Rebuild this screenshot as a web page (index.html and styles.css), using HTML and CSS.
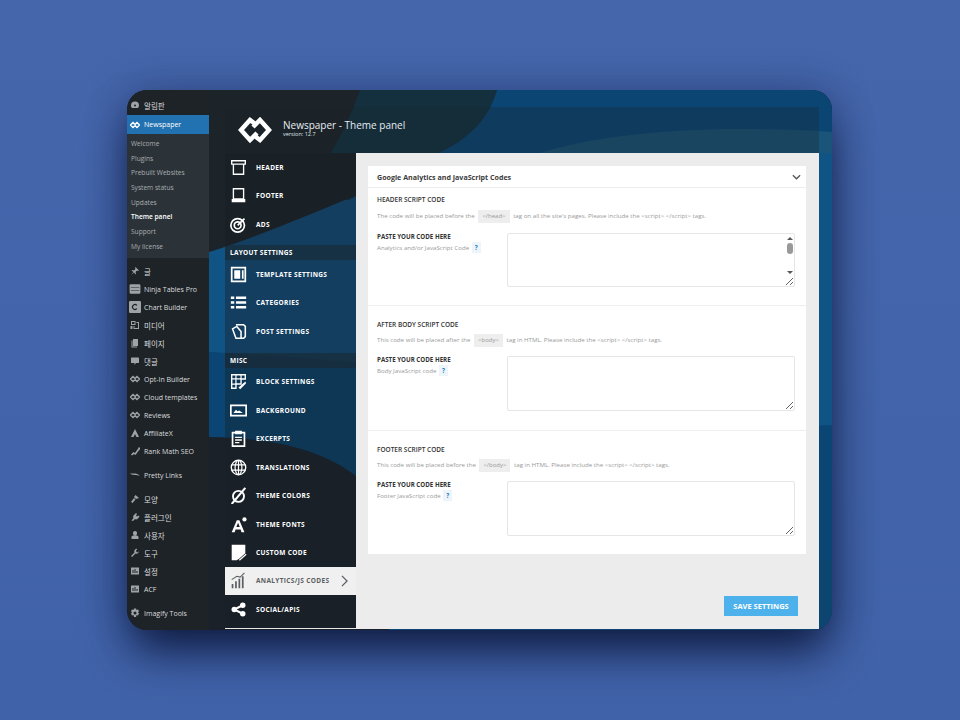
FILE: index.html
```html
<!DOCTYPE html>
<html lang="ko">
<head>
  <meta charset="UTF-8">
  <meta name="viewport" content="width=device-width, initial-scale=1.0">
  <title>Newspaper - Theme panel</title>
  <link rel="stylesheet" href="styles.css">
</head>

<body>
  <svg class="sprite" width="0" height="0">
    <symbol id="i-eye" viewBox="0 0 20 20"><path d="M1 10l5-5 4 4 4-4 5 5-5 5-4-4-4 4z" fill="none" stroke="currentColor" stroke-width="3"/></symbol>
    <symbol id="i-gauge" viewBox="0 0 20 20"><path d="M10 3a8 8 0 0 0-8 8c0 2 .7 4 2 5h12a8 8 0 0 0 2-5 8 8 0 0 0-8-8zm0 10a2 2 0 1 1 0-4 2 2 0 0 1 0 4z" fill="currentColor"/></symbol>
    <symbol id="i-pin" viewBox="0 0 20 20"><path d="M11 2l7 7-2 1-2-1-3 3 1 3-1 2-3-4-6 5 5-6-4-3 2-1 3 1 3-3-1-2z" fill="currentColor"/></symbol>
    <symbol id="i-table" viewBox="0 0 20 20"><path d="M1 4a2 2 0 0 1 2-2h14a2 2 0 0 1 2 2v12a2 2 0 0 1-2 2H3a2 2 0 0 1-2-2zm2 3v1h14V7zm0 5v1h14v-1z" fill="currentColor" fill-rule="evenodd"/></symbol>
    <symbol id="i-chart" viewBox="0 0 20 20"><path d="M2 0h16a2 2 0 0 1 2 2v16a2 2 0 0 1-2 2H2a2 2 0 0 1-2-2V2a2 2 0 0 1 2-2zm12 7a5 5 0 1 0 0 6l-2-1a3 3 0 1 1 0-4z" fill="currentColor" fill-rule="evenodd"/></symbol>
    <symbol id="i-media" viewBox="0 0 20 20"><path d="M2 2h9v8H2zm2 2v4h5V4zm9 0h5v14H7v-6h2v4h7V6h-3zM1 12h4v6H1z" fill="currentColor" fill-rule="evenodd"/></symbol>
    <symbol id="i-page" viewBox="0 0 20 20"><path d="M6 2h10v14H6zM3 5h2v12h9v2H3z" fill="currentColor"/></symbol>
    <symbol id="i-comment" viewBox="0 0 20 20"><path d="M3 3h14a1 1 0 0 1 1 1v9a1 1 0 0 1-1 1h-5l-3 4v-4H3a1 1 0 0 1-1-1V4a1 1 0 0 1 1-1z" fill="currentColor"/></symbol>
    <symbol id="i-peak" viewBox="0 0 20 20"><path d="M10 2l8 16h-5l-3-6-3 6H2z" fill="currentColor"/></symbol>
    <symbol id="i-math" viewBox="0 0 20 20"><path d="M2 17l5-5 3 2 7-10-1-1h4v5l-1-1-8 11-3-2-4 3z" fill="currentColor"/></symbol>
    <symbol id="i-link" viewBox="0 0 20 20"><path d="M0 7h10c4 0 7 2 10 5-4-2-7-2-10-2L3 9z" fill="currentColor"/></symbol>
    <symbol id="i-brush" viewBox="0 0 20 20"><path d="M11 2l7 6-6 2-4-4zM8 8l3 3-6 7-3-2z" fill="currentColor"/></symbol>
    <symbol id="i-plug" viewBox="0 0 20 20"><path d="M12 2l2 2-2 3 2 2 3-2 2 2-4 5-3 1-2-1-4 4-3-1 4-5-1-2 1-3z" fill="currentColor"/></symbol>
    <symbol id="i-user" viewBox="0 0 20 20"><path d="M10 2a4 4 0 0 1 4 5 4 4 0 0 1-8 0 4 4 0 0 1 4-5zM3 18v-4c0-2 3-3 4-3h6c1 0 4 1 4 3v4z" fill="currentColor"/></symbol>
    <symbol id="i-tool" viewBox="0 0 20 20"><path d="M18 6a5 5 0 0 1-7 5l-7 7-2-2 7-7a5 5 0 0 1 6-7l-3 3 1 3 3 1z" fill="currentColor"/></symbol>
    <symbol id="i-set" viewBox="0 0 20 20"><path d="M2 3h16v14H2zm7 3v8h2V6zM5 8v6h2V8zm8 2v4h2v-4z" fill="currentColor" fill-rule="evenodd"/></symbol>
    <symbol id="i-gear" viewBox="0 0 20 20"><path d="M8 1h4l1 3 3-1 2 3-2 3 2 2-2 4-3-1-1 4H8l-1-4-3 1-2-4 2-2-2-3 2-3 3 1zm2 6a3 3 0 1 0 0 6 3 3 0 0 0 0-6z" fill="currentColor" fill-rule="evenodd"/></symbol>
  </svg>

  <div class="window">
    <aside class="wp-menu">
      <div class="wp-item"><svg class="wp-icon"><use href="#i-gauge"/></svg><span class="ko">알림판</span></div>
      <div class="wp-item wp-current"><svg class="wp-icon"><use href="#i-eye"/></svg>Newspaper</div>
      <div class="wp-sub">
        <div class="wp-sub-item">Welcome</div>
        <div class="wp-sub-item">Plugins</div>
        <div class="wp-sub-item">Prebuilt Websites</div>
        <div class="wp-sub-item">System status</div>
        <div class="wp-sub-item">Updates</div>
        <div class="wp-sub-item wp-sub-on">Theme panel</div>
        <div class="wp-sub-item">Support</div>
        <div class="wp-sub-item">My license</div>
      </div>
      <div class="wp-group">
        <div class="wp-item"><svg class="wp-icon"><use href="#i-pin"/></svg><span class="ko">글</span></div>
        <div class="wp-item"><svg class="wp-icon wp-icon-big"><use href="#i-table"/></svg>Ninja Tables Pro</div>
        <div class="wp-item"><svg class="wp-icon wp-icon-big"><use href="#i-chart"/></svg>Chart Builder</div>
        <div class="wp-item"><svg class="wp-icon"><use href="#i-media"/></svg><span class="ko">미디어</span></div>
        <div class="wp-item"><svg class="wp-icon"><use href="#i-page"/></svg><span class="ko">페이지</span></div>
        <div class="wp-item"><svg class="wp-icon"><use href="#i-comment"/></svg><span class="ko">댓글</span></div>
        <div class="wp-item"><svg class="wp-icon"><use href="#i-eye"/></svg>Opt-In Builder</div>
        <div class="wp-item"><svg class="wp-icon"><use href="#i-eye"/></svg>Cloud templates</div>
        <div class="wp-item"><svg class="wp-icon"><use href="#i-eye"/></svg>Reviews</div>
        <div class="wp-item"><svg class="wp-icon"><use href="#i-peak"/></svg>AffiliateX</div>
        <div class="wp-item"><svg class="wp-icon"><use href="#i-math"/></svg>Rank Math SEO</div>
      </div>
      <div class="wp-group">
        <div class="wp-item"><svg class="wp-icon"><use href="#i-link"/></svg>Pretty Links</div>
      </div>
      <div class="wp-group">
        <div class="wp-item"><svg class="wp-icon"><use href="#i-brush"/></svg><span class="ko">모양</span></div>
        <div class="wp-item"><svg class="wp-icon"><use href="#i-plug"/></svg><span class="ko">플러그인</span></div>
        <div class="wp-item"><svg class="wp-icon"><use href="#i-user"/></svg><span class="ko">사용자</span></div>
        <div class="wp-item"><svg class="wp-icon"><use href="#i-tool"/></svg><span class="ko">도구</span></div>
        <div class="wp-item"><svg class="wp-icon"><use href="#i-set"/></svg><span class="ko">설정</span></div>
        <div class="wp-item"><svg class="wp-icon"><use href="#i-set"/></svg>ACF</div>
      </div>
      <div class="wp-group">
        <div class="wp-item"><svg class="wp-icon"><use href="#i-gear"/></svg>Imagify Tools</div>
      </div>
    </aside>

    <main class="stage">
      <!-- wave picture behind the panel -->
      <svg class="waves" viewBox="0 0 623 540" preserveAspectRatio="none">
        <rect width="623" height="540" fill="#0a4574"/>
        <path d="M623 52C480 60 240 70 150 105 90 125 40 150 0 160V262C120 268 250 282 330 300 440 320 540 340 623 335z" fill="#105486"/>
        <path d="M623 470C560 462 520 468 470 500V540H623z" fill="#0b4570"/>
        <path d="M0 0H288C280 28 262 48 228 64L140 110H0z" fill="#14303f"/>
        <path d="M0 0H151C140 32 128 52 122 63L160 63V100C100 125 40 150 0 162z" fill="#1c2329"/>
        <path d="M0 347C60 348 110 358 147 386L180 420 180 540H0z" fill="#1a2128"/>
        <path d="M330 63C400 42 500 34 623 42V63z" fill="#1a5478"/>
      </svg>

      <section class="panel">
        <header class="panel-head">
          <svg class="logo" viewBox="0 0 34 26">
            <path d="M16 6L12 3 3 13l9 10 7-7M18 20l4 3 9-10-9-10-7 7" fill="none" stroke="#fff" stroke-width="4.500"/>
          </svg>
          <div>
            <div class="panel-title">Newspaper - Theme panel</div>
            <div class="panel-version">version: 12.7</div>
          </div>
        </header>

        <div class="panel-body">
          <nav class="nav">
            <a class="nav-item">
              <svg class="nav-icon" viewBox="0 0 20 20"><path d="M4 6v12h12V6" fill="none" stroke="currentColor" stroke-width="1.600"/><path d="M2 2h16v4H2z" fill="none" stroke="currentColor" stroke-width="1.600"/></svg>
              HEADER
            </a>
            <a class="nav-item">
              <svg class="nav-icon" viewBox="0 0 20 20"><path d="M4 2h12v12H4z" fill="none" stroke="currentColor" stroke-width="1.600"/><path d="M2 14h16v4H2z" fill="currentColor"/></svg>
              FOOTER
            </a>
            <a class="nav-item">
              <svg class="nav-icon" viewBox="0 0 20 20"><circle cx="9" cy="11" r="8" fill="none" stroke="currentColor" stroke-width="2"/><circle cx="9" cy="11" r="4" fill="none" stroke="currentColor" stroke-width="2"/><path d="M9 11l8-8" stroke="currentColor" stroke-width="2"/></svg>
              ADS
            </a>
            <div class="nav-heading">LAYOUT SETTINGS</div>
            <a class="nav-item">
              <svg class="nav-icon" viewBox="0 0 20 20"><path d="M2 2h16v16H2z" fill="none" stroke="currentColor" stroke-width="2"/><path d="M5 5h7v10H5zM14 5h2v10h-2z" fill="currentColor"/></svg>
              TEMPLATE SETTINGS
            </a>
            <a class="nav-item">
              <svg class="nav-icon" viewBox="0 0 20 20"><path d="M1 3h4v3H1zM7 3h12v3H7zM1 8.500h4v3H1zM7 8.500h12v3H7zM1 14h4v3H1zM7 14h12v3H7z" fill="currentColor"/></svg>
              CATEGORIES
            </a>
            <a class="nav-item">
              <svg class="nav-icon" viewBox="0 0 20 20"><path d="M7 2h9l2 2v12l-2 2H7M3 7l5-3 5 6v8H7z" fill="none" stroke="currentColor" stroke-width="1.800"/></svg>
              POST SETTINGS
            </a>
            <div class="nav-heading">MISC</div>
            <a class="nav-item">
              <svg class="nav-icon" viewBox="0 0 20 20"><path d="M2 2h16v5H13v6H7v5H2z" fill="none" stroke="currentColor" stroke-width="1.600"/><path d="M2 7h11M2 13h5M7 2v5M13 2v5M7 7v6" stroke="currentColor" stroke-width="1.400"/><path d="M10 17l8-7 1 2-7 7z" fill="currentColor"/></svg>
              BLOCK SETTINGS
            </a>
            <a class="nav-item">
              <svg class="nav-icon" viewBox="0 0 20 20"><path d="M1 4h18v12H1z" fill="none" stroke="currentColor" stroke-width="2"/><path d="M4 13l3-4 2 2 2-1 4 3z" fill="currentColor"/></svg>
              BACKGROUND
            </a>
            <a class="nav-item">
              <svg class="nav-icon" viewBox="0 0 20 20"><path d="M3 3h14v16H3z" fill="none" stroke="currentColor" stroke-width="2"/><path d="M6 1h8v4H6zM6 8h8v1.500H6zM6 11h8v1.500H6zM6 14h5v1.500H6z" fill="currentColor"/></svg>
              EXCERPTS
            </a>
            <a class="nav-item">
              <svg class="nav-icon" viewBox="0 0 20 20"><circle cx="10" cy="10" r="8.500" fill="none" stroke="currentColor" stroke-width="1.600"/><path d="M2 7h16M2 13h16M10 2v16" stroke="currentColor" stroke-width="1.400"/><ellipse cx="10" cy="10" rx="4" ry="8.500" fill="none" stroke="currentColor" stroke-width="1.400"/></svg>
              TRANSLATIONS
            </a>
            <a class="nav-item">
              <svg class="nav-icon" viewBox="0 0 20 20"><circle cx="10" cy="11" r="6.500" fill="none" stroke="currentColor" stroke-width="2.200"/><path d="M2 20L18 1" stroke="currentColor" stroke-width="2.400"/></svg>
              THEME COLORS
            </a>
            <a class="nav-item">
              <svg class="nav-icon" viewBox="0 0 20 20"><path d="M2 19L8 5h3l6 14h-3.500l-1-3H6.500l-1 3zM7.500 13h4L9.500 8z" fill="currentColor" fill-rule="evenodd"/><circle cx="17" cy="4" r="2.500" fill="currentColor"/></svg>
              THEME FONTS
            </a>
            <a class="nav-item">
              <svg class="nav-icon" viewBox="0 0 20 20"><path d="M2 1h16v10l-7 6-3 2H2z" fill="currentColor"/><path d="M11 19l8-7" stroke="currentColor" stroke-width="1.500"/></svg>
              CUSTOM CODE
            </a>
            <a class="nav-item nav-active">
              <svg class="nav-icon" viewBox="0 0 20 20"><path d="M2 14h2v5H2zM6 11h2v8H6zM10 8h2v11h-2zM14 5h2v14h-2z" fill="currentColor"/><path d="M2 9l6-4 4 1 5-5" fill="none" stroke="currentColor" stroke-width="1.200"/></svg>
              ANALYTICS/JS CODES
              <svg class="nav-arrow" viewBox="0 0 8 14"><path d="M1 1l6 6-6 6" fill="none" stroke="currentColor" stroke-width="1.500"/></svg>
            </a>
            <a class="nav-item">
              <svg class="nav-icon" viewBox="0 0 20 20"><path d="M15 5L5 10l10 5" fill="none" stroke="currentColor" stroke-width="2.400"/><circle cx="15" cy="5" r="3.200" fill="currentColor"/><circle cx="5" cy="10" r="3.200" fill="currentColor"/><circle cx="15" cy="15" r="3.200" fill="currentColor"/></svg>
              SOCIAL/APIS
            </a>
          </nav>

          <div class="content">
            <div class="card">
              <div class="card-head">
                <span>Google Analytics and JavaScript Codes</span>
                <svg class="card-caret" viewBox="0 0 10 6"><path d="M1 1l4 4 4-4" fill="none" stroke="currentColor" stroke-width="1.500"/></svg>
              </div>

              <div class="block block-first">
                <div class="block-title">HEADER SCRIPT CODE</div>
                <p class="block-desc">The code will be placed before the <code>&lt;/head&gt;</code> tag on all the site's pages. Please include the &lt;script&gt; &lt;/script&gt; tags.</p>
                <div class="field">
                  <div class="field-label">
                    <strong>PASTE YOUR CODE HERE</strong>
                    Analytics and/or JavaScript Code <i class="hint">?</i>
                  </div>
                  <div class="field-box">
                    <textarea class="code"></textarea>
                    <div class="fake-scroll"><span class="up"></span><span class="thumb"></span><span class="down"></span></div>
                  </div>
                </div>
              </div>

              <div class="block">
                <div class="block-title">AFTER BODY SCRIPT CODE</div>
                <p class="block-desc">This code will be placed after the <code>&lt;body&gt;</code> tag in HTML. Please include the &lt;script&gt; &lt;/script&gt; tags.</p>
                <div class="field">
                  <div class="field-label">
                    <strong>PASTE YOUR CODE HERE</strong>
                    Body JavaScript code <i class="hint">?</i>
                  </div>
                  <div class="field-box"><textarea class="code"></textarea></div>
                </div>
              </div>

              <div class="block block-last">
                <div class="block-title">FOOTER SCRIPT CODE</div>
                <p class="block-desc">This code will be placed before the <code>&lt;/body&gt;</code> tag in HTML. Please include the &lt;script&gt; &lt;/script&gt; tags.</p>
                <div class="field">
                  <div class="field-label">
                    <strong>PASTE YOUR CODE HERE</strong>
                    Footer JavaScript code <i class="hint">?</i>
                  </div>
                  <div class="field-box"><textarea class="code"></textarea></div>
                </div>
              </div>
            </div>

            <div class="actions"><button class="save">SAVE SETTINGS</button></div>
          </div>
        </div>
      </section>
    </main>
  </div>
</body>

</html>
```

FILE: styles.css
```css
* {
  box-sizing: border-box;
}

body {
  margin: 0;
  height: 720px;
  padding: 90px 0 0 127px;
  overflow: hidden;
  background: linear-gradient(180deg, #4566ab, #4062a8);
  font-family: "Open Sans", "Noto Sans CJK KR", sans-serif;
}

.sprite {
  position: absolute;
}

.window {
  display: flex;
  width: 705px;
  height: 540px;
  border-radius: 20px;
  overflow: hidden;
  background: #1d2327;
  box-shadow: 0 26px 45px -6px rgba(8, 18, 50, 0.85), 0 0 40px rgba(10, 20, 60, 0.3);
}

/* wordpress menu */
.wp-menu {
  flex: 0 0 82px;
  padding-top: 6px;
  background: #1d2327;
  color: #dcdcde;
  font-size: 7px;
}

.ko {
  font-size: 7.500px;
}

.wp-item {
  display: flex;
  align-items: center;
  gap: 4px;
  height: 18px;
  padding-left: 3px;
  white-space: nowrap;
}

.wp-icon {
  flex: 0 0 10px;
  width: 10px;
  height: 10px;
  color: #9ea3a8;
}

.wp-icon-big {
  flex-basis: 12px;
  width: 12px;
  height: 12px;
  margin: 0 -1px;
}

.wp-current {
  height: 19px;
  margin-top: 1px;
  background: #2271b1;
  color: #fff;
}

.wp-current .wp-icon {
  color: #fff;
}

.wp-sub {
  height: 124px;
  padding-top: 2px;
  background: #2c3338;
  color: #a9adb1;
  font-size: 6.600px;
}

.wp-sub-item {
  display: flex;
  align-items: center;
  height: 14.700px;
  padding-left: 4px;
}

.wp-sub-on {
  color: #fff;
  font-weight: 600;
}

.wp-group {
  margin-bottom: 6px;
}

.wp-sub + .wp-group {
  padding-top: 4px;
}

/* right side with the wave picture */
.stage {
  position: relative;
  flex: 1;
  padding: 17px 13px 1px 16px;
  overflow: hidden;
}

.waves {
  position: absolute;
  top: 0;
  left: 0;
  width: 100%;
  height: 100%;
}

.panel {
  position: relative;
  display: flex;
  flex-direction: column;
  height: 100%;
  background: rgba(28, 35, 42, 0.3);
}

.panel-head {
  display: flex;
  align-items: center;
  gap: 11px;
  height: 46px;
  padding: 0 0 0 13px;
  color: #fff;
}

.logo {
  width: 34px;
  height: 26px;
}

.panel-title {
  margin-top: -4px;
  font-size: 10px;
  line-height: 12px;
  color: #e8edf2;
}

.panel-version {
  font-size: 5.500px;
  line-height: 6px;
  color: #dfe4e8;
}

.panel-body {
  flex: 1;
  display: flex;
  min-height: 0;
}

.nav {
  flex: 0 0 131px;
  border-bottom: 1px solid #e8e8e8;
  background: rgba(20, 28, 36, 0.15);
}

.nav-item {
  display: flex;
  align-items: center;
  height: 28.450px;
  padding-left: 5px;
  color: #fff;
  font-size: 6.500px;
  font-weight: 700;
  letter-spacing: 0.35px;
  white-space: nowrap;
}

.nav-icon {
  flex: 0 0 17px;
  width: 17px;
  height: 17px;
  margin-right: 9px;
}

.nav-heading {
  display: flex;
  align-items: center;
  height: 15px;
  margin-top: 7px;
  padding-left: 5px;
  background: rgba(28, 35, 42, 0.5);
  color: #fff;
  font-size: 6.500px;
  font-weight: 700;
  letter-spacing: 0.3px;
}

.nav-active {
  background: #f0f0f0;
  color: #5b5f63;
}

.nav-arrow {
  width: 7px;
  height: 12px;
  margin-left: auto;
  margin-right: 8px;
}

.content {
  flex: 1;
  display: flex;
  flex-direction: column;
  padding: 13px 13px 13px 12px;
  background: #ececec;
}

.card {
  background: #fff;
  color: #999;
  font-size: 6.150px;
}

.card-head {
  display: flex;
  align-items: center;
  justify-content: space-between;
  height: 22px;
  padding: 0 5px 0 9px;
  border-bottom: 1px solid #ededed;
  color: #3c3c3c;
  font-size: 7.100px;
  font-weight: 700;
}

.card-caret {
  width: 9px;
  height: 6px;
  color: #555;
}

.block {
  padding: 13px 11px 19px 9px;
  border-bottom: 1px solid #eeeeee;
}

.block-first {
  padding-top: 6px;
  padding-bottom: 18px;
}

.block-first .block-desc {
  margin-top: 3px;
}

.block-first .field {
  margin-top: 10px;
}

.block-last {
  padding-bottom: 18px;
  border-bottom: 0;
}

.block-title {
  line-height: 12px;
  color: #333;
  font-size: 6.500px;
  font-weight: 600;
}

.block-desc {
  margin: 2px 0 0;
  line-height: 13px;
  white-space: nowrap;
}

.block-desc code {
  display: inline-block;
  margin: 0 2px;
  padding: 0 4px;
  background: #eeeeee;
  font-family: "Open Sans", sans-serif;
  font-size: 6px;
}

.field {
  display: flex;
  margin-top: 9px;
}

.field-label {
  flex: 0 0 130px;
  margin-top: -2px;
  line-height: 11px;
}

.field-label strong {
  display: block;
  color: #333;
  font-size: 6.200px;
  font-weight: 700;
}

.hint {
  display: inline-block;
  width: 9px;
  margin-left: 1px;
  background: #eef5fa;
  color: #1a7fc0;
  font-style: normal;
  font-weight: 700;
  text-align: center;
}

.field-box {
  position: relative;
  flex: 1;
  height: 55px;
}

.block-first .field-box {
  height: 54px;
}

.code {
  display: block;
  width: 100%;
  height: 100%;
  border: 1px solid #e6e6e6;
  border-radius: 2px;
  background: #fff;
  resize: both;
}

/* scrollbar of the first box */
.fake-scroll {
  position: absolute;
  top: 4px;
  right: 1px;
  bottom: 13px;
  display: flex;
  flex-direction: column;
  align-items: center;
  width: 9px;
}

.up,
.down {
  width: 0;
  height: 0;
  border-left: 3px solid transparent;
  border-right: 3px solid transparent;
}

.up {
  border-bottom: 3px solid #555;
}

.down {
  margin-top: auto;
  border-top: 3px solid #555;
}

.thumb {
  width: 6px;
  height: 11px;
  margin-top: 3px;
  border-radius: 3px;
  background: #999;
}

.actions {
  display: flex;
  justify-content: flex-end;
  margin-top: auto;
  padding-right: 8px;
}

.save {
  width: 74px;
  height: 20px;
  padding: 0;
  border: 0;
  background: #4db2ec;
  color: #fff;
  font-family: "Open Sans", sans-serif;
  font-size: 7.500px;
  font-weight: 700;
}
```
